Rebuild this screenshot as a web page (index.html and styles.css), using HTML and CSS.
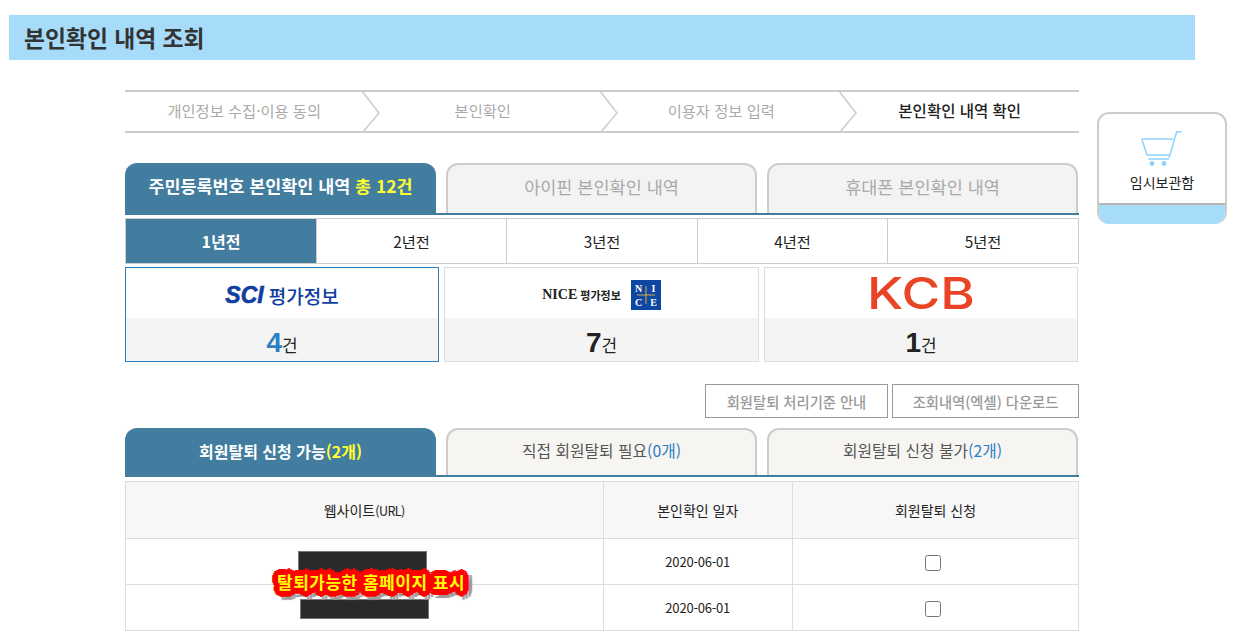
FILE: index.html
```html
<!DOCTYPE html>
<html lang="ko">

<head>
    <meta charset="UTF-8">
    <title>본인확인 내역 조회</title>
    <link rel="stylesheet" href="styles.css">
</head>

<body>
    <h1 class="page-title">본인확인 내역 조회</h1>

    <div class="page-body">
        <div class="content">
            <!-- Steps -->
            <ol class="steps">
                <li class="step">개인정보 수집·이용 동의
                    <svg class="step-arrow" viewBox="0 0 20 41"><path d="M1 0 L18 22 L2 41" /></svg>
                </li>
                <li class="step">본인확인
                    <svg class="step-arrow" viewBox="0 0 20 41"><path d="M1 0 L18 22 L2 41" /></svg>
                </li>
                <li class="step">이용자 정보 입력
                    <svg class="step-arrow" viewBox="0 0 20 41"><path d="M1 0 L18 22 L2 41" /></svg>
                </li>
                <li class="step step-current">본인확인 내역 확인</li>
            </ol>

            <!-- Type tabs -->
            <div class="tabs tabs-type">
                <a href="#" class="tab tab-active">주민등록번호 본인확인 내역&nbsp;<span class="hl">총 12건</span></a>
                <a href="#" class="tab">아이핀 본인확인 내역</a>
                <a href="#" class="tab">휴대폰 본인확인 내역</a>
            </div>

            <!-- Years -->
            <div class="years">
                <a href="#" class="year year-active">1년전</a>
                <a href="#" class="year">2년전</a>
                <a href="#" class="year">3년전</a>
                <a href="#" class="year">4년전</a>
                <a href="#" class="year">5년전</a>
            </div>

            <!-- Agencies -->
            <div class="agencies">
                <div class="agency agency-active">
                    <div class="agency-logo logo-sci"><b>SCI</b><span>평가정보</span></div>
                    <div class="agency-count"><b>4</b>건</div>
                </div>
                <div class="agency">
                    <div class="agency-logo logo-nice">
                        <span>NICE</span><span class="nice-kr">평가정보</span>
                        <svg class="nice-mark" viewBox="0 0 30 30">
                            <rect width="30" height="30" fill="#0d47a1" />
                            <path d="M15 6 V24 M6 15 H24" stroke="#d9a94a" stroke-width="1" />
                            <text x="7.5" y="12" class="nice-letter">N</text>
                            <text x="22.5" y="12" class="nice-letter">I</text>
                            <text x="7.5" y="26" class="nice-letter">C</text>
                            <text x="22.5" y="26" class="nice-letter">E</text>
                        </svg>
                    </div>
                    <div class="agency-count"><b>7</b>건</div>
                </div>
                <div class="agency">
                    <div class="agency-logo logo-kcb"><span>KCB</span></div>
                    <div class="agency-count"><b>1</b>건</div>
                </div>
            </div>

            <div class="actions">
                <a href="#" class="action-btn">회원탈퇴 처리기준 안내</a>
                <a href="#" class="action-btn">조회내역(엑셀) 다운로드</a>
            </div>

            <!-- Withdraw tabs -->
            <div class="tabs tabs-withdraw">
                <a href="#" class="tab tab-active">회원탈퇴 신청 가능<span class="hl">(2개)</span></a>
                <a href="#" class="tab">직접 회원탈퇴 필요<span class="cnt">(0개)</span></a>
                <a href="#" class="tab">회원탈퇴 신청 불가<span class="cnt">(2개)</span></a>
            </div>

            <table class="sites">
                <thead>
                    <tr>
                        <th class="col-site">웹사이트<span class="url">(URL)</span></th>
                        <th class="col-date">본인확인 일자</th>
                        <th>회원탈퇴 신청</th>
                    </tr>
                </thead>
                <tbody>
                    <tr>
                        <td class="site-cell">
                            <div class="redact redact-top"></div>
                            <span class="site-note">탈퇴가능한 홈페이지 표시</span>
                        </td>
                        <td>2020-06-01</td>
                        <td><input type="checkbox" class="check"></td>
                    </tr>
                    <tr>
                        <td class="site-cell">
                            <div class="redact redact-bottom"></div>
                        </td>
                        <td>2020-06-01</td>
                        <td><input type="checkbox" class="check"></td>
                    </tr>
                </tbody>
            </table>
        </div>

        <!-- Side menu -->
        <aside class="side-box">
            <a href="#" class="side-link">
                <svg class="cart" viewBox="0 0 44 40">
                    <path d="M41.6 1.7 H36.7 L29 28 M1.7 9 H33 M1.7 9 L7 25 H30 M8 29 H29" />
                    <circle cx="12" cy="33.5" r="2.4" />
                    <circle cx="24" cy="33.5" r="2.4" />
                </svg>
                임시보관함
            </a>
            <div class="side-foot"></div>
        </aside>
    </div>
</body>

</html>
```

FILE: styles.css
```css
/* General Styles */
html,
body {
    height: 642px;
    overflow: hidden;
}

body {
    margin: 0;
    background-color: #ffffff;
    color: #222222;
    font-family: "Noto Sans CJK KR", "Noto Sans", sans-serif;
}

a {
    color: inherit;
    text-decoration: none;
}

.page-title {
    width: 1186px;
    height: 45px;
    margin: 15px 0 0 9px;
    padding-left: 15px;
    box-sizing: border-box;
    background-color: #a6dcfa;
    color: #333333;
    font-size: 22.8px;
    font-weight: 700;
    line-height: 45px;
}

.page-body {
    display: flex;
    align-items: flex-start;
    gap: 18px;
    margin: 30px 0 0 125px;
}

.content {
    width: 954px;
    flex: none;
}

/* Steps */
.steps {
    display: grid;
    grid-template-columns: repeat(4, 1fr);
    height: 43px;
    margin: 0;
    padding: 0;
    box-sizing: border-box;
    list-style: none;
    border-top: 2px solid #cccccc;
    border-bottom: 2px solid #cccccc;
}

.step {
    position: relative;
    color: #aaaaaa;
    font-size: 15.3px;
    line-height: 37px;
    text-align: center;
}

.step-current {
    color: #222222;
    font-weight: 500;
    font-size: 15.5px;
}

.step-arrow {
    position: absolute;
    top: -1px;
    right: -17px;
    width: 20px;
    height: 41px;
}

.step-arrow path {
    fill: #ffffff;
    stroke: #cccccc;
    stroke-width: 1.5;
}

/* Tabs */
.tabs {
    display: flex;
    gap: 10px;
    border-bottom: 2px solid #427c9f;
}

.tabs-type {
    height: 50px;
    margin-top: 30px;
}

.tabs-withdraw {
    height: 47px;
}

.tab {
    display: block;
    width: 311px;
    box-sizing: border-box;
    border: 2px solid #cccccc;
    border-bottom: 0;
    border-radius: 12px 12px 0 0;
    background-color: #f3f3f3;
    color: #aaaaaa;
    font-size: 17.5px;
    line-height: 44px;
    text-align: center;
}

.tab-active {
    height: calc(100% + 2px);
    border: 0;
    background-color: #427c9f;
    color: #ffffff;
    font-size: 17.4px;
    font-weight: 700;
    line-height: 46px;
}

.hl {
    color: #ffff33;
}

.tabs-withdraw .tab {
    background-color: #f7f5f2;
    color: #555555;
    font-size: 15.8px;
    line-height: 42px;
}

.tabs-withdraw .tab-active {
    background-color: #427c9f;
    color: #ffffff;
    font-size: 16px;
    line-height: 46px;
}

.cnt {
    color: #2b7fc3;
}

/* Years */
.years {
    display: grid;
    grid-template-columns: 190px 190px 191px 190px 191px;
    height: 46px;
    margin-top: 3px;
    box-sizing: border-box;
    border: 1px solid #cccccc;
}

.year {
    border-left: 1px solid #cccccc;
    font-size: 15.3px;
    line-height: 44px;
    text-align: center;
}

.year:first-child {
    border-left: 0;
}

.year-active {
    background-color: #427c9f;
    color: #ffffff;
    font-size: 16px;
    font-weight: 700;
}

/* Agencies */
.agencies {
    display: flex;
    gap: 5px;
    margin-top: 3px;
}

.agency {
    width: 315px;
    height: 95px;
    box-sizing: border-box;
    border: 1px solid #dddddd;
}

.agency:last-child {
    width: 314px;
}

.agency-active {
    width: 314px;
    border-color: #2b7fc3;
}

.agency-logo {
    display: flex;
    align-items: center;
    justify-content: center;
    height: 50px;
    box-sizing: border-box;
}

.agency-count {
    height: 43px;
    background-color: #f4f4f4;
    font-size: 17px;
    line-height: 49px;
    text-align: center;
}

.agency-count b {
    font-family: "Liberation Sans", sans-serif;
    font-size: 28px;
}

.agency-active .agency-count b {
    color: #2b7fc3;
}

.logo-sci {
    gap: 5px;
    padding-top: 5px;
    color: #0f3ea0;
    font-size: 19px;
    font-weight: 500;
}

.logo-sci b {
    font-family: "Liberation Sans", sans-serif;
    font-size: 23px;
    font-style: italic;
    font-weight: 700;
    -webkit-text-stroke: 0.6px #0f3ea0;
}

.logo-nice {
    padding-top: 4px;
    color: #222222;
    font-family: "Liberation Serif", serif;
    font-size: 14px;
    font-weight: 700;
}

.nice-kr {
    margin-left: 3px;
    font-family: "Noto Sans CJK KR", sans-serif;
    font-size: 11px;
}

.nice-mark {
    width: 30px;
    height: 30px;
    margin-left: 10px;
}

.nice-letter {
    fill: #ffffff;
    font-family: "Liberation Serif", serif;
    font-size: 10px;
    font-weight: 700;
    text-anchor: middle;
}

.logo-kcb span {
    color: #e94426;
    font-family: "Inter", sans-serif;
    font-size: 44px;
    font-weight: 500;
    line-height: 50px;
    transform: scaleX(1.2);
}

/* Action buttons */
.actions {
    display: flex;
    justify-content: flex-end;
    gap: 4px;
    margin: 22px 0 10px;
}

.action-btn {
    width: 183px;
    height: 34px;
    box-sizing: border-box;
    border: 1px solid #999999;
    color: #999999;
    font-size: 14.3px;
    font-weight: 500;
    line-height: 33px;
    text-align: center;
}

.action-btn:last-child {
    width: 187px;
}

/* Table */
.sites {
    width: 954px;
    margin-top: 4px;
    border-collapse: collapse;
    table-layout: fixed;
    font-size: 13px;
}

.sites th,
.sites td {
    border: 1px solid #dddddd;
    padding: 0;
    text-align: center;
}

.sites th {
    height: 57px;
    padding-bottom: 1px;
    box-sizing: border-box;
    background-color: #f7f7f7;
    font-size: 14px;
    font-weight: 400;
}

.sites td {
    height: 45px;
    letter-spacing: -0.2px;
}

.col-site {
    width: 477.5px;
}

.col-date {
    width: 189.5px;
}

.url {
    font-size: 12.5px;
    letter-spacing: -0.5px;
}

.site-cell {
    position: relative;
}

.redact {
    width: 129px;
    box-sizing: border-box;
    border: 1px solid #777777;
    background-color: #2a2a2a;
}

.redact-top {
    height: 24px;
    margin: 3px 0 0 172px;
}

.redact-bottom {
    height: 20px;
    margin: 3px 0 0 174px;
}

/* Sits over the two redacted rows */
.site-note {
    position: absolute;
    top: 28px;
    left: 151px;
    z-index: 1;
    color: #ffff00;
    font-size: 17px;
    font-weight: 700;
    line-height: 30px;
    white-space: nowrap;
    letter-spacing: 0.5px;
    text-shadow:
        6px 0 0 #ff0000, -6px 0 0 #ff0000, 0 6px 0 #ff0000, 0 -6px 0 #ff0000,
        4px 4px 0 #ff0000, -4px 4px 0 #ff0000, 4px -4px 0 #ff0000, -4px -4px 0 #ff0000,
        5px 2px 0 #ff0000, -5px 2px 0 #ff0000, 5px -2px 0 #ff0000, -5px -2px 0 #ff0000,
        2px 5px 0 #ff0000, -2px 5px 0 #ff0000, 2px -5px 0 #ff0000, -2px -5px 0 #ff0000,
        3px 0 0 #ff0000, -3px 0 0 #ff0000, 0 3px 0 #ff0000, 0 -3px 0 #ff0000,
        9px 3px 1px #999999, 8px 6px 1px #999999, 5px 8px 1px #999999, 2px 9px 1px #999999, 9px 0 1px #999999;
}

.check {
    width: 16px;
    height: 16px;
    margin: 1px 6px 0 0;
    vertical-align: middle;
}

/* Side menu */
.side-box {
    width: 130px;
    height: 112px;
    margin-top: 22px;
    flex: none;
    box-sizing: border-box;
    border: 2px solid #cccccc;
    border-bottom: 0;
    border-radius: 12px;
    overflow: hidden;
    display: flex;
    flex-direction: column;
}

.side-link {
    display: flex;
    flex-direction: column;
    align-items: center;
    height: 89px;
    padding-top: 16px;
    box-sizing: border-box;
    font-size: 14px;
}

.cart {
    width: 44px;
    height: 40px;
    margin-bottom: 2px;
}

.cart path {
    fill: none;
    stroke: #90d2ff;
    stroke-width: 1.5;
}

.cart circle {
    fill: #90d2ff;
}

.side-foot {
    flex: 1;
    border-top: 2px solid #b5b5b5;
    background-color: #a6dcfa;
}
```
